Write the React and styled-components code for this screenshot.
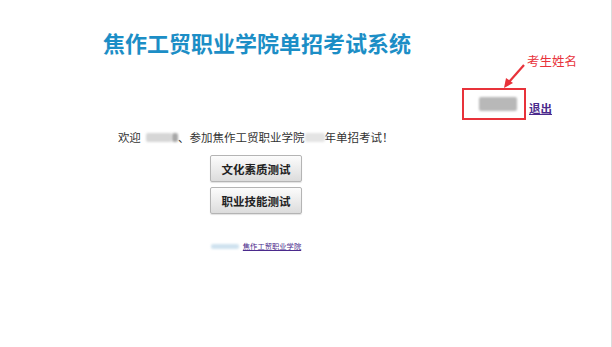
import React from 'react';
import styled, { createGlobalStyle } from 'styled-components';

const GlobalStyle = createGlobalStyle`
  html, body {
    margin: 0;
    padding: 0;
    background: #fff;
  }

  body {
    font-family: "Noto Sans CJK SC", "Noto Sans", sans-serif;
  }
`;

const Page = styled.div`
  border-right: 1px solid #dcdcdc;
  box-sizing: border-box;
  height: 347px;
  margin-right: 1px;
  position: relative;
  width: 612px;
`;

const Title = styled.h1`
  color: #1c8ec6;
  font-size: 22px;
  font-weight: 700;
  line-height: 26px;
  margin: 0;
  padding-top: 29px;
  text-align: center;
  width: 514px;
`;

const UserRow = styled.div`
  align-items: center;
  display: flex;
  justify-content: flex-end;
  margin-top: 33px;
  padding-right: 59px;
`;

const NameBox = styled.div`
  align-items: center;
  border: 2px solid #e8323a;
  box-sizing: border-box;
  display: flex;
  height: 32px;
  justify-content: flex-end;
  padding-right: 7px;
  width: 64px;
`;

const Blur = styled.span`
  background: ${p => p.color || '#c9c9c9'};
  border-radius: 2px;
  display: inline-block;
  filter: blur(1.2px);
  height: ${p => p.h || 12}px;
  vertical-align: middle;
  width: ${p => p.w}px;
`;

const Logout = styled.a`
  color: #4b2a8c;
  font-size: 11.5px;
  font-weight: 700;
  margin-left: 3px;
  margin-top: 7px;
  text-decoration: underline;
`;

const Content = styled.div`
  align-items: center;
  display: flex;
  flex-direction: column;
  width: 512px;
`;

const Welcome = styled.p`
  align-items: center;
  color: #333;
  display: flex;
  font-size: 11.5px;
  line-height: 16px;
  margin: 9px 0 0 2px;
`;

const Button = styled.button`
  background: linear-gradient(#fcfcfc, #e9e9e9 60%, #dcdcdc);
  border: 1px solid #b4b4b4;
  border-radius: 2px;
  box-shadow: 0 1px 1px rgba(0, 0, 0, 0.12);
  color: #222;
  font-family: "Noto Sans CJK SC", sans-serif;
  font-size: 11.5px;
  font-weight: 700;
  height: 27px;
  margin-top: ${p => p.top}px;
  padding: 0;
  width: 92px;
`;

const Footer = styled.div`
  align-items: center;
  display: flex;
  gap: 4px;
  margin-top: 27px;
`;

const FooterLink = styled.a`
  color: #4b2a8c;
  font-size: 7.3px;
  text-decoration: underline;
`;

const Note = styled.div`
  color: #e8323a;
  font-size: 12.5px;
  left: 527px;
  line-height: 14px;
  position: absolute;
  top: 54px;
`;

const Arrow = styled.svg`
  left: 500px;
  position: absolute;
  top: 60px;
`;

export default function App() {
  return (
    <Page>
      <GlobalStyle />
      <Title>焦作工贸职业学院单招考试系统</Title>

      <UserRow>
        <NameBox>
          <Blur w={38} h={14} color="#b8b8b8" />
        </NameBox>
        <Logout href="#">退出</Logout>
      </UserRow>

      <Content>
        <Welcome>
          欢迎&nbsp;&nbsp;
          <Blur w={26} h={9} color="#d6d6d6" />
          <Blur w={6} h={9} color="#a8a8a8" />
          、参加焦作工贸职业学院
          <Blur w={20} h={9} color="#e4e4e4" />
          年单招考试！&nbsp;
        </Welcome>
        <Button top={10}>文化素质测试</Button>
        <Button top={5}>职业技能测试</Button>
        <Footer>
          <Blur w={28} h={5} color="#cfe2ef" />
          <FooterLink href="#">焦作工贸职业学院</FooterLink>
        </Footer>
      </Content>

      <Note>考生姓名</Note>
      <Arrow width="30" height="30" viewBox="0 0 30 30">
        <line x1="24" y1="5" x2="9" y2="22" stroke="#e8323a" strokeWidth="2.2" />
        <polygon points="4,28 6,18 13,23" fill="#e8323a" />
      </Arrow>
    </Page>
  );
}
